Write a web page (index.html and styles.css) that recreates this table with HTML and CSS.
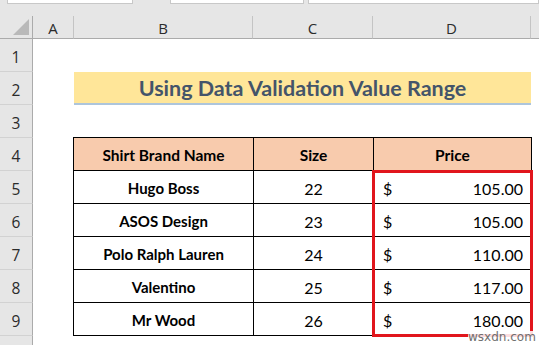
FILE: index.html
```html
<!DOCTYPE html>
<html>
<head>
<meta charset="utf-8">
<link rel="stylesheet" href="styles.css">
</head>
<body>
<div class="topstrip">
  <div class="box box1"></div>
  <div class="box box2"></div>
  <div class="box box3"></div>
</div>
<div class="sheet">
  <div class="corner"><span class="tri"></span></div>
  <div class="colhead">A</div>
  <div class="colhead">B</div>
  <div class="colhead">C</div>
  <div class="colhead">D</div>
  <div class="colhead last"></div>

  <div class="rowhead r1">1</div>
  <div class="rowhead r2">2</div>
  <div class="rowhead r3">3</div>
  <div class="rowhead r4">4</div>
  <div class="rowhead r5">5</div>
  <div class="rowhead r6">6</div>
  <div class="rowhead r7">7</div>
  <div class="rowhead r8">8</div>
  <div class="rowhead r9">9</div>
  <div class="rowhead r10"></div>

  <div class="title">Using Data Validation Value Range</div>

  <table class="data">
    <colgroup><col class="cb"><col class="cc"><col class="cd"></colgroup>
    <tr class="hdr"><th>Shirt Brand Name</th><th>Size</th><th>Price</th></tr>
    <tr><td class="name">Hugo Boss</td><td class="num">22</td><td class="price"><span>$</span><span>105.00</span></td></tr>
    <tr><td class="name">ASOS Design</td><td class="num">23</td><td class="price"><span>$</span><span>105.00</span></td></tr>
    <tr><td class="name">Polo Ralph Lauren</td><td class="num">24</td><td class="price"><span>$</span><span>110.00</span></td></tr>
    <tr><td class="name">Valentino</td><td class="num">25</td><td class="price"><span>$</span><span>117.00</span></td></tr>
    <tr><td class="name">Mr Wood</td><td class="num">26</td><td class="price"><span>$</span><span>180.00</span></td></tr>
  </table>

  <div class="redbox"></div>
</div>
<div class="watermark">wsxdn.com</div>
</body>
</html>
```
FILE: styles.css
```css
html, body {
  margin: 0;
  padding: 0;
  width: 539px;
  height: 345px;
  overflow: hidden;
  background: #ffffff;
  font-family: Lato, "Open Sans", sans-serif;
  position: relative;
}

.topstrip {
  height: 16px;
  background: #e6e6e6;
  display: flex;
  align-items: flex-start;
  box-sizing: border-box;
}
.box {
  height: 4px;
  background: #ffffff;
  border: 1px solid #c8c8c8;
  border-top: none;
  box-sizing: border-box;
}
.box1 { margin-left: 7px; width: 126px; }
.box2 { margin-left: 37px; width: 134px; }
.box3 { margin-left: 4px; flex: 1; }

.sheet {
  display: grid;
  grid-template-columns: 33px 41px 179px 120px 158px 1fr;
  grid-template-rows: 23px repeat(9, 33px) 1fr;
  height: 329px;
}

.corner {
  grid-column: 1;
  grid-row: 1;
  background: #e6e6e6;
  border-right: 1px solid #ababab;
  border-bottom: 1px solid #ababab;
  position: relative;
}
.tri {
  position: absolute;
  right: 3px;
  bottom: 3px;
  width: 0;
  height: 0;
  border-left: 16px solid transparent;
  border-bottom: 16px solid #b9b9b9;
}

.colhead {
  grid-row: 1;
  background: #e6e6e6;
  border-right: 1px solid #c4c4c4;
  border-bottom: 1px solid #ababab;
  display: flex;
  align-items: center;
  justify-content: center;
  font-family: "Open Sans", "Liberation Sans", sans-serif;
  font-size: 15px;
  color: #2b2b2b;
  padding-top: 1px;
  box-sizing: border-box;
}
.colhead.last { border-right: none; }

.rowhead {
  grid-column: 1;
  background: #e6e6e6;
  border-right: 1px solid #ababab;
  border-bottom: 1px solid #d2d2d2;
  display: flex;
  align-items: center;
  justify-content: center;
  font-family: "Open Sans", "Liberation Sans", sans-serif;
  font-size: 15.5px;
  color: #2b2b2b;
  padding-top: 4px;
  box-sizing: border-box;
}
.r1 { grid-row: 2; }
.r2 { grid-row: 3; }
.r3 { grid-row: 4; }
.r4 { grid-row: 5; }
.r5 { grid-row: 6; }
.r6 { grid-row: 7; }
.r7 { grid-row: 8; }
.r8 { grid-row: 9; }
.r9 { grid-row: 10; }
.r10 { grid-row: 11; border-bottom: none; }

.title {
  grid-column: 3 / 6;
  grid-row: 3;
  background: #ffe699;
  border-bottom: 2px solid #adc5db;
  color: #44546a;
  font-weight: bold;
  font-size: 21.5px;
  display: flex;
  align-items: center;
  justify-content: center;
  padding-top: 1px;
  box-sizing: border-box;
}

.data {
  grid-column: 3 / 6;
  grid-row: 5 / 11;
  border-collapse: collapse;
  width: 458px;
  margin-left: -1px;
  margin-top: -1px;
  table-layout: fixed;
  font-size: 16px;
  color: #000;
}
.cb { width: 180px; }
.cc { width: 120px; }
.cd { width: 158px; }
.data th, .data td {
  border: 1px solid #000;
  height: 32px;
  padding: 0;
  box-sizing: border-box;
  vertical-align: middle;
  text-align: center;
  padding-top: 2px;
}
.data th {
  background: #f8cbad;
  font-weight: bold;
  font-size: 15.5px;
}
.data td.name { font-weight: bold; font-size: 15px; }
.data td.num { font-weight: normal; }
.data td.price {
  padding-left: 9px;
  padding-right: 8px;
}
.data td.price span:first-child { float: left; }
.data td.price span:last-child { float: right; }

.redbox {
  grid-column: 5;
  grid-row: 6 / 11;
  border: 3px solid #e1161c;
  margin: -1px -2px -1px -1px;
  z-index: 2;
  pointer-events: none;
}

.watermark {
  position: absolute;
  left: 468px;
  top: 331px;
  font-family: "DejaVu Sans", sans-serif;
  font-size: 12px;
  color: #6f6f6f;
  background: rgba(255,255,255,0.85);
  line-height: 13px;
  z-index: 3;
}
```
